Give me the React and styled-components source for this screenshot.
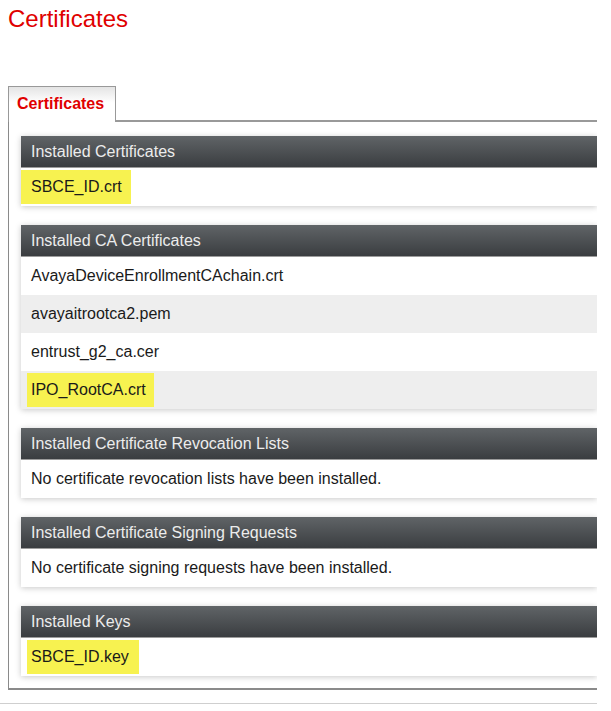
import styled, { createGlobalStyle } from "styled-components";

const GlobalStyle = createGlobalStyle`
  body {
    margin: 0;
    background: #fff;
    font-family: "Liberation Sans", Arial, sans-serif;
  }
`;

const sections = [
  {
    title: "Installed Certificates",
    rows: [{ text: "SBCE_ID.crt", mark: { left: 10, right: 9 } }],
  },
  {
    title: "Installed CA Certificates",
    rows: [
      { text: "AvayaDeviceEnrollmentCAchain.crt" },
      { text: "avayaitrootca2.pem" },
      { text: "entrust_g2_ca.cer" },
      { text: "IPO_RootCA.crt", mark: { left: 4, right: 8 } },
    ],
  },
  {
    title: "Installed Certificate Revocation Lists",
    rows: [{ text: "No certificate revocation lists have been installed." }],
  },
  {
    title: "Installed Certificate Signing Requests",
    rows: [{ text: "No certificate signing requests have been installed." }],
  },
  {
    title: "Installed Keys",
    rows: [{ text: "SBCE_ID.key", mark: { left: 4, right: 10 } }],
  },
];

const App = () => {
  return (
    <>
      <GlobalStyle />
      <Page>
        <Title>Certificates</Title>
        <TabStrip>
          <Tab>Certificates</Tab>
          <TabFill />
        </TabStrip>
        <Panel>
          {sections.map(({ title, rows }) => (
            <Section key={title}>
              <SectionHeader>{title}</SectionHeader>
              {rows.map(({ text, mark }, i) => (
                <Row key={text} $alt={i % 2 === 1}>
                  {mark ? (
                    <Mark $left={mark.left} $right={mark.right}>
                      {text}
                    </Mark>
                  ) : (
                    text
                  )}
                </Row>
              ))}
            </Section>
          ))}
        </Panel>
        <Footer />
      </Page>
    </>
  );
};

export default App;

const Page = styled.div`
  width: 597px;
  overflow: hidden;
`;

const Title = styled.h1`
  margin: 0;
  padding: 6px 0 0 8px;
  font-size: 24px;
  font-weight: normal;
  line-height: 26px;
  color: #e00000;
`;

const TabStrip = styled.div`
  display: flex;
  align-items: flex-end;
  margin: 54px 0 0 8px;
`;

const Tab = styled.div`
  width: 108px;
  height: 36px;
  box-sizing: border-box;
  border: 1px solid #999;
  border-bottom: none;
  background: linear-gradient(#e4e4e4, #fff 45%);
  padding: 8px 0 0 8px;
  font-size: 16px;
  font-weight: bold;
  color: #e00000;
`;

const TabFill = styled.div`
  flex: 1;
  border-bottom: 2px solid #999;
`;

const Panel = styled.div`
  margin-left: 8px;
  border-left: 1px solid #8a8a8a;
  border-bottom: 2px solid #8a8a8a;
  padding: 14px 0 12px 12px;
  display: flex;
  flex-direction: column;
  gap: 19px;
`;

const Section = styled.div`
  box-shadow: 0 1px 6px rgba(0, 0, 0, 0.22);
`;

const SectionHeader = styled.div`
  height: 32px;
  box-sizing: border-box;
  padding-left: 10px;
  line-height: 32px;
  font-size: 16px;
  color: #ececec;
  background: linear-gradient(#606467, #3a3d40);
  border-bottom: 1px solid #9c9c9c;
  white-space: nowrap;
`;

const Row = styled.div`
  height: 38px;
  display: flex;
  align-items: center;
  padding-left: 10px;
  font-size: 16px;
  color: #1a1a1a;
  background: ${({ $alt }) => ($alt ? "#eeeeee" : "#fff")};
  white-space: nowrap;
`;

const Mark = styled.span`
  display: flex;
  align-items: center;
  height: 34px;
  margin-left: -${({ $left }) => $left}px;
  padding: 0 ${({ $right }) => $right}px 0 ${({ $left }) => $left}px;
  background: #f7f250;
`;

const Footer = styled.div`
  margin-top: 13px;
  border-top: 1px solid #cfcfcf;
`;
